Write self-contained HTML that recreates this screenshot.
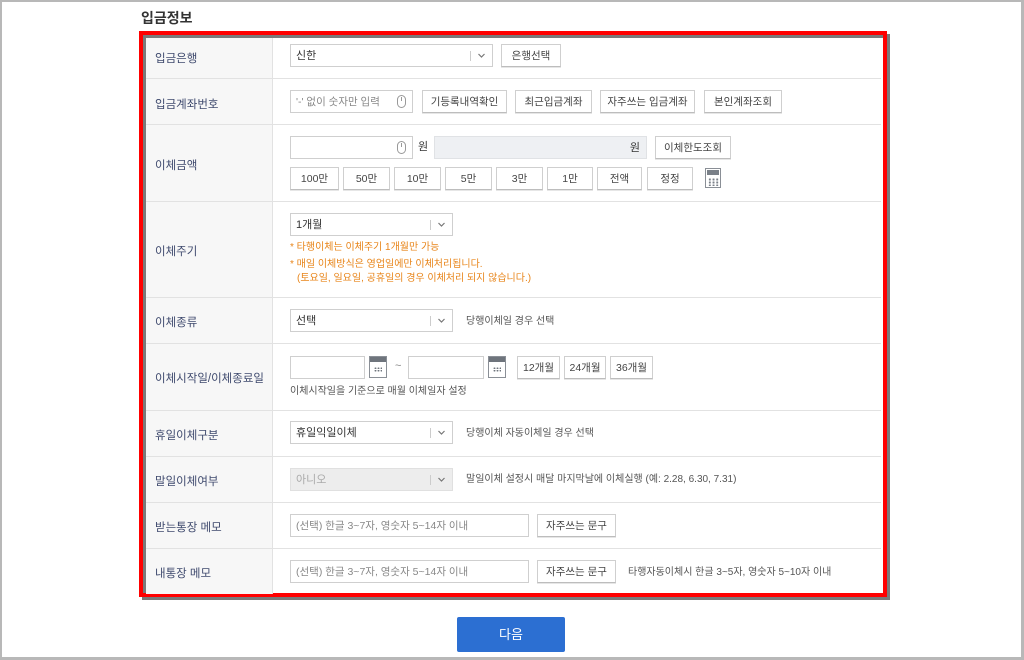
<!DOCTYPE html>
<html><head><meta charset="utf-8"><style>
*{box-sizing:border-box;margin:0;padding:0}
body{width:1024px;height:660px;background:#fff;font-family:"Liberation Sans","Noto Sans CJK KR",sans-serif;position:relative;overflow:hidden;color:#333}
.frame{position:absolute;left:0;top:0;width:1024px;height:660px;border:2px solid #b8b8b8;border-right-width:3px;border-bottom-width:3px}
.a{position:absolute}
.t{position:absolute;font-size:11px;white-space:nowrap;line-height:13px}
.lbl{position:absolute;left:155px;font-size:11.5px;color:#3f4a6e;white-space:nowrap}
.hl{position:absolute;left:146px;width:735px;height:1px;background:#e2e2e2}
.inp{position:absolute;height:23px;border:1px solid #cfcfcf;background:#fff;font-size:11px;line-height:23px;padding-left:5px;color:#333}
.btn{position:absolute;height:23px;border:1px solid #cfcfcf;border-bottom-color:#bdbdbd;background:#fff;font-size:10.5px;line-height:22px;text-align:center;color:#444;box-shadow:0 1px 0 #e6e6e6}
.sel::after{content:"";position:absolute;right:21px;top:6px;width:1px;height:10px;background:#ccc}
.chev{position:absolute;right:6px;top:6px;width:9px;height:9px}
.cal{position:absolute;width:18px;height:22px;border:1px solid #8a8f96;background:#fff}
.cal::before{content:"";position:absolute;left:0;top:0;right:0;height:5px;background:#6e747c}
.cal::after{content:"";position:absolute;left:4px;top:10px;width:8px;height:5px;background:radial-gradient(circle,#6e747c 0.8px,transparent 1px) 0 0/3px 2.5px}
.mouse{position:absolute;width:9px;height:13px;border:1px solid #999;border-radius:5px;top:4px}
.mouse::after{content:"";position:absolute;left:3px;top:1px;width:1px;height:4px;background:#999}
.or{color:#e8851a}
</style></head><body>
<div class="frame"></div>
<div class="t" style="left:141px;top:9px;font-size:14px;font-weight:bold;color:#333;line-height:18px">입금정보</div>
<div class="a" style="left:142px;top:34px;width:748px;height:566px;background:#7a7a7a"></div>
<div class="a" style="left:139px;top:31px;width:748px;height:566px;border:4px solid #f00;background:#fff"></div>
<div class="a" style="left:143px;top:35px;width:740px;height:558px;border-top:3px solid #7a7a7a;border-left:3px solid #7a7a7a"></div>
<div class="a" style="left:146px;top:38px;width:127px;height:556px;background:#f7f7f7;border-right:1px solid #e2e2e2"></div>
<div class="hl" style="top:78px"></div><div class="hl" style="top:124px"></div><div class="hl" style="top:201px"></div><div class="hl" style="top:297px"></div><div class="hl" style="top:343px"></div><div class="hl" style="top:410px"></div><div class="hl" style="top:456px"></div><div class="hl" style="top:502px"></div><div class="hl" style="top:548px"></div>

<div class="lbl" style="top:50px">입금은행</div>
<div class="lbl" style="top:96px">입금계좌번호</div>
<div class="lbl" style="top:157px">이체금액</div>
<div class="lbl" style="top:243px">이체주기</div>
<div class="lbl" style="top:314px">이체종류</div>
<div class="lbl" style="top:370px">이체시작일/이체종료일</div>
<div class="lbl" style="top:427px">휴일이체구분</div>
<div class="lbl" style="top:473px">말일이체여부</div>
<div class="lbl" style="top:519px">받는통장 메모</div>
<div class="lbl" style="top:565px">내통장 메모</div>

<svg width="0" height="0" style="position:absolute"><defs><symbol id="cv" viewBox="0 0 9 9"><path d="M1.5 3 L4.5 6 L7.5 3" fill="none" stroke="#777" stroke-width="1.2"/></symbol></defs></svg>

<div class="inp sel" style="left:290px;top:44px;width:203px">신한<svg class="chev"><use href="#cv"/></svg></div>
<div class="btn" style="left:501px;top:44px;width:60px">은행선택</div>

<div class="inp" style="left:290px;top:90px;width:123px;color:#888;font-size:10.5px">'-' 없이 숫자만 입력<span class="mouse" style="left:106px"></span></div>
<div class="btn" style="left:422px;top:90px;width:85px">기등록내역확인</div>
<div class="btn" style="left:515px;top:90px;width:77px">최근입금계좌</div>
<div class="btn" style="left:600px;top:90px;width:95px">자주쓰는 입금계좌</div>
<div class="btn" style="left:704px;top:90px;width:78px">본인계좌조회</div>

<div class="inp" style="left:290px;top:136px;width:123px"><span class="mouse" style="left:106px"></span></div>
<div class="t" style="left:418px;top:141px">원</div>
<div class="inp" style="left:434px;top:136px;width:213px;background:#eef0f3;border-color:#e0e2e5;text-align:right;padding-right:6px">원</div>
<div class="btn" style="left:655px;top:136px;width:76px">이체한도조회</div>
<div class="btn" style="left:290px;top:167px;width:49px">100만</div>
<div class="btn" style="left:343px;top:167px;width:47px">50만</div>
<div class="btn" style="left:394px;top:167px;width:47px">10만</div>
<div class="btn" style="left:445px;top:167px;width:47px">5만</div>
<div class="btn" style="left:496px;top:167px;width:47px">3만</div>
<div class="btn" style="left:547px;top:167px;width:46px">1만</div>
<div class="btn" style="left:597px;top:167px;width:45px">전액</div>
<div class="btn" style="left:647px;top:167px;width:46px">정정</div>
<div class="a" style="left:705px;top:168px;width:16px;height:20px;border:1px solid #8a8f96;background:#fff"><div class="a" style="left:1px;top:1px;width:12px;height:5px;background:#7a8088"></div><div class="a" style="left:2px;top:9px;width:11px;height:8px;background:radial-gradient(circle,#7a8088 1px,transparent 1.2px) 0 0/3.7px 3px"></div></div>

<div class="inp sel" style="left:290px;top:213px;width:163px">1개월<svg class="chev"><use href="#cv"/></svg></div>
<div class="t or" style="left:290px;top:241px;font-size:10px">* 타행이체는 이체주기 1개월만 가능</div>
<div class="t or" style="left:290px;top:258px;font-size:10px">* 매일 이체방식은 영업일에만 이체처리됩니다.</div>
<div class="t or" style="left:297px;top:272px;font-size:10px">(토요일, 일요일, 공휴일의 경우 이체처리 되지 않습니다.)</div>

<div class="inp sel" style="left:290px;top:309px;width:163px">선택<svg class="chev"><use href="#cv"/></svg></div>
<div class="t" style="left:466px;top:315px;font-size:10px;color:#555">당행이체일 경우 선택</div>

<div class="inp" style="left:290px;top:356px;width:75px"></div>
<div class="cal" style="left:369px;top:356px"></div>
<div class="t" style="left:395px;top:360px;color:#888">~</div>
<div class="inp" style="left:408px;top:356px;width:76px"></div>
<div class="cal" style="left:488px;top:356px"></div>
<div class="btn" style="left:517px;top:356px;width:43px">12개월</div>
<div class="btn" style="left:564px;top:356px;width:42px">24개월</div>
<div class="btn" style="left:610px;top:356px;width:43px">36개월</div>
<div class="t" style="left:290px;top:385px;font-size:10px;color:#555">이체시작일을 기준으로 매월 이체일자 설정</div>

<div class="inp sel" style="left:290px;top:421px;width:163px">휴일익일이체<svg class="chev"><use href="#cv"/></svg></div>
<div class="t" style="left:466px;top:427px;font-size:10px;color:#555">당행이체 자동이체일 경우 선택</div>

<div class="inp sel" style="left:290px;top:468px;width:163px;background:#ededed;border-color:#e0e0e0;color:#aaa">아니오<svg class="chev"><use href="#cv"/></svg></div>
<div class="t" style="left:466px;top:473px;font-size:10px;color:#555">말일이체 설정시 매달 마지막날에 이체실행 (예: 2.28, 6.30, 7.31)</div>

<div class="inp" style="left:290px;top:514px;width:239px;color:#888;font-size:10.5px">(선택) 한글 3~7자, 영숫자 5~14자 이내</div>
<div class="btn" style="left:537px;top:514px;width:79px">자주쓰는 문구</div>

<div class="inp" style="left:290px;top:560px;width:239px;color:#888;font-size:10.5px">(선택) 한글 3~7자, 영숫자 5~14자 이내</div>
<div class="btn" style="left:537px;top:560px;width:79px">자주쓰는 문구</div>
<div class="t" style="left:628px;top:566px;font-size:10px;color:#555">타행자동이체시 한글 3~5자, 영숫자 5~10자 이내</div>

<div class="a" style="left:457px;top:617px;width:108px;height:35px;background:#2c6fd2;border-radius:2px;color:#fff;font-size:13px;text-align:center;line-height:35px">다음</div>
</body></html>
